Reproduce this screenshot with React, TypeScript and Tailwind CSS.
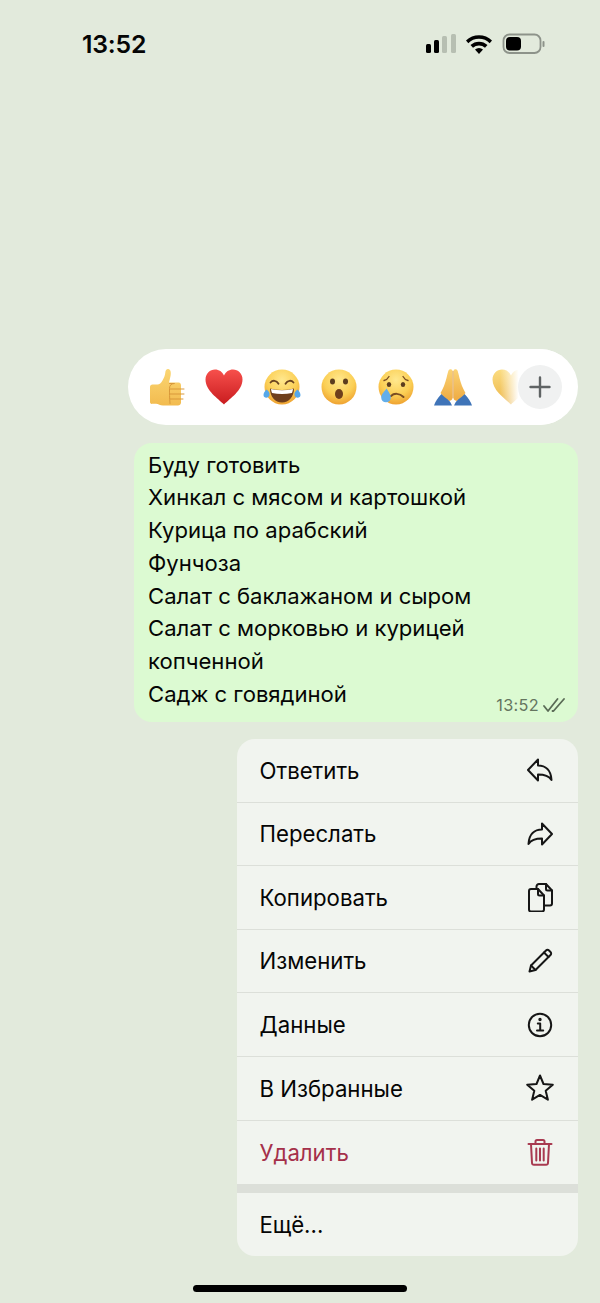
import type { ReactNode } from "react";

const FONT = "font-['Inter','Liberation_Sans',sans-serif]";

// 이모지는 폰트가 없어서 SVG로 그림
function Face({ id, children }: { id: string; children: ReactNode }) {
  return (
    <svg width="40" height="40" viewBox="0 0 40 40" className="shrink-0">
      <defs>
        <radialGradient id={id} cx="50%" cy="30%" r="72%">
          <stop offset="0%" stopColor="#ffe88e" />
          <stop offset="60%" stopColor="#fbcf55" />
          <stop offset="100%" stopColor="#ee9f2e" />
        </radialGradient>
      </defs>
      <circle cx="20" cy="20" r="17.5" fill={`url(#${id})`} />
      {children}
    </svg>
  );
}

function Thumb() {
  return (
    <svg width="40" height="40" viewBox="0 0 40 40" className="shrink-0">
      <defs>
        <linearGradient id="thumbG" x1="0" y1="0" x2="0" y2="1">
          <stop offset="0%" stopColor="#fbd673" />
          <stop offset="100%" stopColor="#f2bb4f" />
        </linearGradient>
      </defs>
      <path
        d="M3 20c0-1.500 1-2.500 2.500-2.500h5c2 0 3.500-1.500 5-4 1.500-2.500 2.500-5 2.800-8 .2-2.500 1.500-4 3.200-3.500 2 .6 2.700 3 2.200 6-.4 2.300-1 4.500-1.700 7.500h9.500c2 0 2.500 1.500 2.500 3v17c0 2-1.500 3-3 3H16c-3 0-4.500-1.500-7-1.700H5.500C4 37.300 3 36.300 3 35z"
        fill="url(#thumbG)"
      />
      <g fill="none" stroke="#d9983a" strokeWidth="1" strokeLinecap="round">
        <path d="M23 22h14" />
        <path d="M23 27h14" />
        <path d="M23 32h13" />
        <path d="M22.500 16.500h5c-3.500 0-5 2-5 5 0 5 0 9 .5 15" />
      </g>
    </svg>
  );
}

function HeartShape({ id, from, to }: { id: string; from: string; to: string }) {
  return (
    <svg width="40" height="40" viewBox="0 0 40 40" className="shrink-0">
      <defs>
        <linearGradient id={id} x1="0" y1="0" x2="0" y2="1">
          <stop offset="0%" stopColor={from} />
          <stop offset="100%" stopColor={to} />
        </linearGradient>
      </defs>
      <path
        d="M20 37.500C14 31.500 1.500 23.500 1.500 12.500 1.500 6.500 6 2.500 11 2.500c4 0 7.300 2.200 9 6 1.700-3.800 5-6 9-6 5 0 9.500 4 9.500 10 0 11-12.500 19-18.500 25z"
        fill={`url(#${id})`}
      />
    </svg>
  );
}

function Laugh() {
  return (
    <Face id="laughG">
      <g fill="none" stroke="#6b4420" strokeWidth="1.800" strokeLinecap="round">
        <path d="M8.500 15.500c2-2.500 6-2.500 8 1.200" />
        <path d="M23.500 16.700c2-3.700 6-3.700 8-1.200" />
      </g>
      <path d="M8 21.500c8 2 16 2 24 0 0 8-5 14-12 14S8 29.500 8 21.500z" fill="#6f3f1c" />
      <path d="M9 22c7.500 1.700 14.500 1.700 22 0-.2 1.500-.5 2.700-1 3.900-6.500 1.300-13.500 1.300-20 0-.5-1.200-.9-2.400-1-3.900z" fill="#fff" />
      <path d="M1.500 28c0-2 1.500-4 3-5.500 1.500 1.200 3.500 3 3 5.500-.3 1.700-1.700 2.700-3.200 2.700S1.500 29.700 1.500 28z" fill="#56a8ea" />
      <path d="M38.500 28c0-2-1.500-4-3-5.500-1.500 1.200-3.500 3-3 5.500.3 1.700 1.700 2.700 3.200 2.700s2.800-1 2.800-2.700z" fill="#56a8ea" />
    </Face>
  );
}

function Wow() {
  return (
    <Face id="wowG">
      <ellipse cx="13.500" cy="14.500" rx="2.500" ry="2.900" fill="#5c3d1e" />
      <ellipse cx="26.500" cy="14.500" rx="2.500" ry="2.900" fill="#5c3d1e" />
      <ellipse cx="20" cy="27" rx="4" ry="5" fill="#6f3f1c" />
    </Face>
  );
}

function Cry() {
  return (
    <Face id="cryG">
      <g fill="none" stroke="#7a4d22" strokeWidth="1.300" strokeLinecap="round">
        <path d="M8 13.500c2-.5 4-2 5-4" />
        <path d="M32 13.500c-2-.5-4-2-5-4" />
        <path d="M15 29c3-3 8.500-3 12.500 1" strokeWidth="2" />
      </g>
      <ellipse cx="13" cy="17.500" rx="2.200" ry="2.500" fill="#5c3d1e" />
      <ellipse cx="27" cy="17.500" rx="2.200" ry="2.500" fill="#5c3d1e" />
      <path d="M10.500 21.500c1.500 2.500 4.300 5.500 4.300 9 0 3-2 4.800-4.800 4.800s-4.800-1.800-4.800-4.800c0-3.500 3.800-6.500 5.300-9z" fill="#62aeea" />
    </Face>
  );
}

function Pray() {
  return (
    <svg width="40" height="40" viewBox="0 0 40 40" className="shrink-0">
      <defs>
        <linearGradient id="prayG" x1="0" y1="0" x2="0" y2="1">
          <stop offset="0%" stopColor="#fbd373" />
          <stop offset="100%" stopColor="#eeaa42" />
        </linearGradient>
      </defs>
      <path d="M1 38.500c1-3.500 4-8 7.500-11.500 3 1 6 4 9 8.500l1.500 3z" fill="#3f74b8" />
      <path d="M39 38.500c-1-3.500-4-8-7.500-11.500-3 1-6 4-9 8.500l-1.500 3z" fill="#3f74b8" />
      <path d="M19.500 3.500c-1-1.700-3.500-1.500-4.200.5-1.200 4-2.300 10-4.300 15-1 2.500-2.500 5-3.500 7 2.500 3 6 5.500 9 8l2-1c.8-.5 1-1.200 1-2z" fill="url(#prayG)" />
      <path d="M20.500 3.500c1-1.700 3.500-1.500 4.200.5 1.200 4 2.300 10 4.300 15 1 2.500 2.500 5 3.500 7-2.500 3-6 5.500-9 8l-2-1c-.8-.5-1-1.200-1-2z" fill="url(#prayG)" />
      <path d="M20 4v27" stroke="#d8923a" strokeWidth="0.800" fill="none" />
    </svg>
  );
}

// 메뉴 아이콘 (28x28 기준)
function MenuIcon({ children, red }: { children: ReactNode; red?: boolean }) {
  return (
    <svg
      width="30"
      height="30"
      viewBox="0 0 30 30"
      fill="none"
      stroke={red ? "#a83a50" : "#161616"}
      strokeWidth="2"
      strokeLinecap="round"
      strokeLinejoin="round"
      className="shrink-0"
    >
      {children}
    </svg>
  );
}

const reply = <path d="M3 15L13 4.500v6c7.500 0 13 4.500 13.500 14.500-2.500-4-6.500-5.500-13.500-5.500v6z" />;
const forward = <path d="M27 15L17 4.500v6c-7.500 0-13 4.500-13.500 14.500 2.500-4 6.500-5.500 13.500-5.500v6z" />;
const copy = (
  <>
    <path d="M19 23.500h6a2 2 0 0 0 2-2V8.500L21 2h-7a2.500 2.500 0 0 0-2.500 2.500V6" />
    <path d="M21 2v5a1.500 1.500 0 0 0 1.500 1.500H27" />
    <path d="M6 7h7l6 6.500v14a2 2 0 0 1-2 2H6a2 2 0 0 1-2-2V9a2 2 0 0 1 2-2z" />
    <path d="M13 7v5a1.500 1.500 0 0 0 1.500 1.500H19" />
  </>
);
const pencil = (
  <>
    <path d="M4.500 25.500l1.500-6L21 4.500a2.100 2.100 0 0 1 3 0l1.500 1.500a2.100 2.100 0 0 1 0 3L10.500 24z" />
    <path d="M6 19.500l4.500 4.500" />
    <path d="M19 6.500l4.500 4.500" />
  </>
);
const info = (
  <>
    <circle cx="15" cy="15" r="11.200" />
    <circle cx="15" cy="9.500" r="0.700" fill="#161616" />
    <path d="M12.800 13.500H15.200V20.500M12 20.500h6.200" />
  </>
);
const star = <path d="M15 2.500l3.500 8.500 9.300.7-7.100 6 2.200 9-7.900-4.800-7.900 4.800 2.200-9-7.100-6 9.300-.7z" />;
const trash = (
  <>
    <path d="M3.500 7h23" />
    <path d="M10.500 7V4.500A1.500 1.500 0 0 1 12 3h6a1.500 1.500 0 0 1 1.500 1.500V7" />
    <path d="M6 7l1 19a2 2 0 0 0 2 1.800h12a2 2 0 0 0 2-1.800l1-19" />
    <path d="M11.300 11.500v12M15 11.500v12M18.700 11.500v12" />
  </>
);

const items: { label: string; icon: ReactNode }[] = [
  { label: "Ответить", icon: reply },
  { label: "Переслать", icon: forward },
  { label: "Копировать", icon: copy },
  { label: "Изменить", icon: pencil },
  { label: "Данные", icon: info },
  { label: "В Избранные", icon: star },
];

const lines = [
  "Буду готовить",
  "Хинкал с мясом и картошкой",
  "Курица по арабский",
  "Фунчоза",
  "Салат с баклажаном и сыром",
  "Салат с морковью и курицей копченной",
  "Садж с говядиной",
];

export default function App() {
  return (
    <div className={`${FONT} flex h-[1303px] w-[600px] flex-col items-end overflow-hidden bg-[#e2eadc] pr-[22px] text-[#050505]`}>
      {/* status bar */}
      <div className="mr-[-22px] flex h-[88px] w-[600px] items-center justify-between pl-[82px] pr-[55px]">
        <span className="text-[24.800px] font-semibold leading-none tracking-[-0.2px]">13:52</span>
        <svg width="120" height="24" viewBox="0 0 120 24">
          <rect x="1" y="12" width="5" height="9" rx="1.500" fill="#000" />
          <rect x="9" y="8" width="5" height="13" rx="1.500" fill="#000" />
          <rect x="17" y="4" width="5" height="17" rx="1.500" fill="#b7bfb2" />
          <rect x="26" y="2" width="5" height="19" rx="1.500" fill="#b7bfb2" />
          <path d="M41 8.500a18.500 18.500 0 0 1 26 0l-2.300 2.700a15 15 0 0 0-21.400 0z" fill="#000" />
          <path d="M45.500 13a12.500 12.500 0 0 1 17 0L60 15.700a9 9 0 0 0-12 0z" fill="#000" />
          <path d="M50 17.500a6 6 0 0 1 8 0L54 22z" fill="#000" />
          <rect x="78.500" y="2.500" width="37" height="18.500" rx="6" fill="none" stroke="#8d938a" strokeWidth="1.800" />
          <rect x="81" y="5" width="15" height="13.500" rx="4" fill="#000" />
          <rect x="117.500" y="9" width="2" height="6" rx="1" fill="#8d938a" />
        </svg>
      </div>

      {/* reactions */}
      <div className="relative mt-[261px] flex h-[76px] w-[450px] items-center gap-[17.300px] overflow-hidden rounded-full bg-white pl-[19px]">
        <Thumb />
        <HeartShape id="redG" from="#f7504c" to="#c91c1f" />
        <Laugh />
        <Wow />
        <Cry />
        <Pray />
        <HeartShape id="yellowG" from="#fbdc80" to="#ecb64a" />
        <div className="absolute right-[16px] top-0 flex h-full w-[62px] items-center justify-end bg-linear-to-r from-transparent to-white to-30%">
          <div className="flex h-[44px] w-[44px] items-center justify-center rounded-full bg-[#f0f1f1]">
            <svg width="22" height="22" viewBox="0 0 22 22" fill="none" stroke="#5f6364" strokeWidth="2.400" strokeLinecap="round">
              <path d="M11 1.500v19M1.500 11h19" />
            </svg>
          </div>
        </div>
      </div>

      {/* message */}
      <div className="relative mt-[18px] h-[279px] w-[444px] rounded-[18px] bg-[#dcfad2] pl-[14px] pr-[14px] pt-[5.500px] text-[22.100px] leading-[32.800px]">
        {lines.map((l) => (
          <div key={l}>{l}</div>
        ))}
        <div className="absolute bottom-[7px] right-[13px] flex items-center gap-[4px] text-[16.300px] leading-[20px] tracking-[0.3px] text-[#64755f]">
          13:52
          <svg width="22" height="16" viewBox="0 0 22 16" fill="none" stroke="#5a6b56" strokeWidth="1.800" strokeLinecap="round" strokeLinejoin="round">
            <path d="M1 9l4 5L14.500 2" />
            <path d="M9.500 14l1 0L21 2" />
          </svg>
        </div>
      </div>

      {/* context menu */}
      <div className="mt-[17px] w-[341px] overflow-hidden rounded-[18px] bg-[#f1f4ef] text-[22.200px]">
        {items.map((it) => (
          <div key={it.label} className="flex h-[63.600px] items-center justify-between border-b border-[#dcdfd9] pl-[22.500px] pr-[23px]">
            {it.label}
            <MenuIcon>{it.icon}</MenuIcon>
          </div>
        ))}
        <div className="flex h-[63.600px] items-center justify-between pl-[22.500px] pr-[23px] text-[#a5304a]">
          Удалить
          <MenuIcon red>{trash}</MenuIcon>
        </div>
        <div className="h-[9px] bg-[#dcdfd9]" />
        <div className="flex h-[63px] items-center pl-[22.500px]">Ещё...</div>
      </div>

      {/* home indicator */}
      <div className="mr-[-22px] flex w-[600px] justify-center pt-[29px]">
        <div className="h-[7px] w-[214px] rounded-full bg-black" />
      </div>
    </div>
  );
}
